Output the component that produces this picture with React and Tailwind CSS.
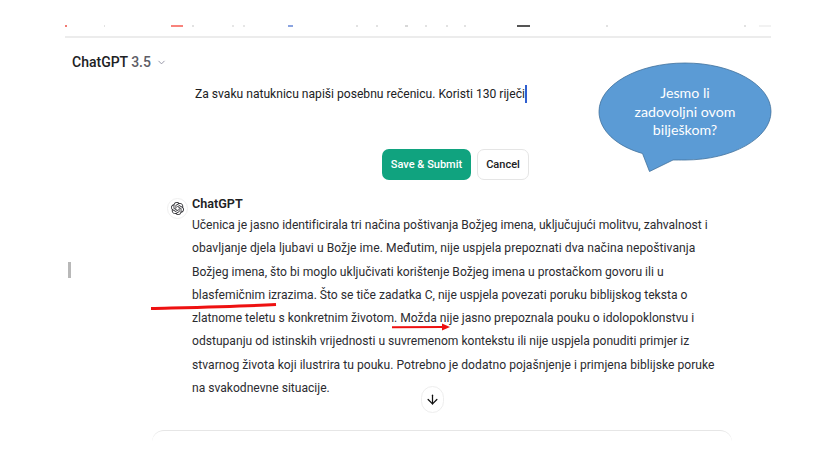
import React from 'react';
import { ChevronDown, ArrowDown } from 'lucide-react';
import { SiOpenai } from 'react-icons/si';

// Tragovi ikona odrezani pri vrhu snimke
const topMarks = [
  { x: 65, w: 2, color: '#f27a72' },
  { x: 104, w: 1, color: '#e2e2e2' },
  { x: 171, w: 12, color: '#f8837c' },
  { x: 192, w: 2, color: '#e2e2e2' },
  { x: 232, w: 2, color: '#e6e6e6' },
  { x: 243, w: 2, color: '#e6e6e6' },
  { x: 288, w: 5, color: '#8ba4e0' },
  { x: 356, w: 2, color: '#e2e2e2' },
  { x: 376, w: 2, color: '#e2e2e2' },
  { x: 405, w: 3, color: '#d8d8d8' },
  { x: 425, w: 2, color: '#e2e2e2' },
  { x: 446, w: 2, color: '#e2e2e2' },
  { x: 464, w: 2, color: '#e2e2e2' },
  { x: 517, w: 13, color: '#555555' },
  { x: 606, w: 2, color: '#e2e2e2' },
  { x: 744, w: 2, color: '#e2e2e2' },
  { x: 759, w: 12, color: '#f2f2f2' },
];

// Retci su prelomljeni kao na snimci, razmak slova izjednacava sirinu retka
const answerLines = [
  { text: 'Učenica je jasno identificirala tri načina poštivanja Božjeg imena, uključujući molitvu, zahvalnost i', cls: 'tracking-[-0.03px]' },
  { text: 'obavljanje djela ljubavi u Božje ime. Međutim, nije uspjela prepoznati dva načina nepoštivanja', cls: 'tracking-[0.05px]' },
  { text: 'Božjeg imena, što bi moglo uključivati korištenje Božjeg imena u prostačkom govoru ili u', cls: '' },
  { text: 'blasfemičnim izrazima. Što se tiče zadatka C, nije uspjela povezati poruku biblijskog teksta o', cls: '' },
  { text: 'zlatnome teletu s konkretnim životom. Možda nije jasno prepoznala pouku o idolopoklonstvu i', cls: '' },
  { text: 'odstupanju od istinskih vrijednosti u suvremenom kontekstu ili nije uspjela ponuditi primjer iz', cls: '' },
  { text: 'stvarnog života koji ilustrira tu pouku. Potrebno je dodatno pojašnjenje i primjena biblijske poruke', cls: 'tracking-[0.03px]' },
  { text: 'na svakodnevne situacije.', cls: '' },
];

export default function App() {
  return (
    <div className="relative h-[466px] w-[828px] overflow-hidden bg-white font-['Roboto',sans-serif] text-[#202123]">
      <div className="ml-[65px] w-[706px]">
        {/* Odrezani vrh s rubom */}
        <div className="relative h-[38px] border-b-2 border-[#ececec]">
          {topMarks.map((m) => (
            <span
              key={m.x}
              className="absolute top-[25px] h-[1.5px]"
              style={{ left: m.x - 65, width: m.w, backgroundColor: m.color }}
            />
          ))}
        </div>

        {/* Naslov */}
        <div className="mt-[14px] flex h-[20px] items-center pl-[7px] text-[14px] font-medium">
          <span>ChatGPT</span>
          <span className="ml-[3px] text-[#5d5d66]">3.5</span>
          <ChevronDown size={11} strokeWidth={2} className="ml-[5px] text-[#8e8ea0]" />
        </div>

        {/* Uredena poruka */}
        <div className="mt-[12px] flex h-[20px] items-center pl-[130px] text-[12.1px]">
          <span>Za svaku natuknicu napiši posebnu rečenicu. Koristi 130 riječi</span>
          <span className="h-[18px] w-[2px] bg-[#2f5fd0]" />
        </div>

        <div className="mt-[45px] flex h-[31px] gap-[6px] pl-[317px] text-[11px] font-medium">
          <button className="w-[89px] rounded-[7px] bg-[#10a37f] pt-px text-white">Save &amp; Submit</button>
          <button className="w-[52px] rounded-[7px] border border-[#e5e5e5] bg-white pt-px text-[#202123]">Cancel</button>
        </div>

        {/* Odgovor */}
        <div className="mt-[15px] flex pl-[102px]">
          <div className="mt-[3px] flex h-[21px] w-[21px] items-center justify-center rounded-full border border-[#f0f0f0]">
            <SiOpenai size={13} className="text-[#2b2b30]" />
          </div>
          <div className="ml-[4px]">
            <div className="text-[12.6px] leading-[17px] font-semibold">ChatGPT</div>
            <div className="mt-[2px] text-[12.1px] leading-[23.3px] whitespace-nowrap text-[#2b2b30]">
              {answerLines.map((line) => (
                <div key={line.text} className={line.cls}>{line.text}</div>
              ))}
            </div>
          </div>
        </div>
      </div>

      {/* Polje za unos, odrezano dnom snimke */}
      <div className="absolute top-[430px] left-[152px] h-[12px] w-[580px] rounded-t-[12px] border-t border-[#e6e6e6]" />

      {/* Gumb za pomicanje */}
      <div className="absolute top-[386px] left-[421px] flex h-[27px] w-[23px] items-center justify-center rounded-full border border-[#eeeeee] bg-white">
        <ArrowDown size={15} strokeWidth={2} className="text-[#111111]" />
      </div>

      {/* Klizac */}
      <div className="absolute top-[262px] left-[68px] h-[16px] w-[3px] bg-[#b8b8b8]" />

      {/* Oblacic */}
      <svg className="absolute top-0 left-0" width="828" height="466" viewBox="0 0 828 466">
        <path
          d="M642.5 153.5 C616 146 599 130 599 111.5 C599 85 637.5 63 685 63 C732.5 63 771 85 771 111.5 C771 138 732.5 160 685 160 C680 160 677 160 673 160 L649.5 171.5 Z"
          fill="#5b9bd5"
          stroke="#41719c"
          strokeWidth="0.8"
        />
        {/* Crvene oznake */}
        <path d="M151 308.5 C190 307.5 240 306.5 276 304.5" fill="none" stroke="#ee1111" strokeWidth="3" />
        <path d="M392 327.3 L443 327" fill="none" stroke="#ee1111" strokeWidth="2" />
        <path d="M442 323.5 L450 327 L442 330.5 Z" fill="#ee1111" />
      </svg>
      <div className="absolute top-[84px] left-[625px] w-[120px] text-center font-['Lato',sans-serif] text-[14.2px] leading-[18.5px] text-white">
        Jesmo li
        <br />
        zadovoljni ovom
        <br />
        bilješkom?
      </div>
    </div>
  );
}
